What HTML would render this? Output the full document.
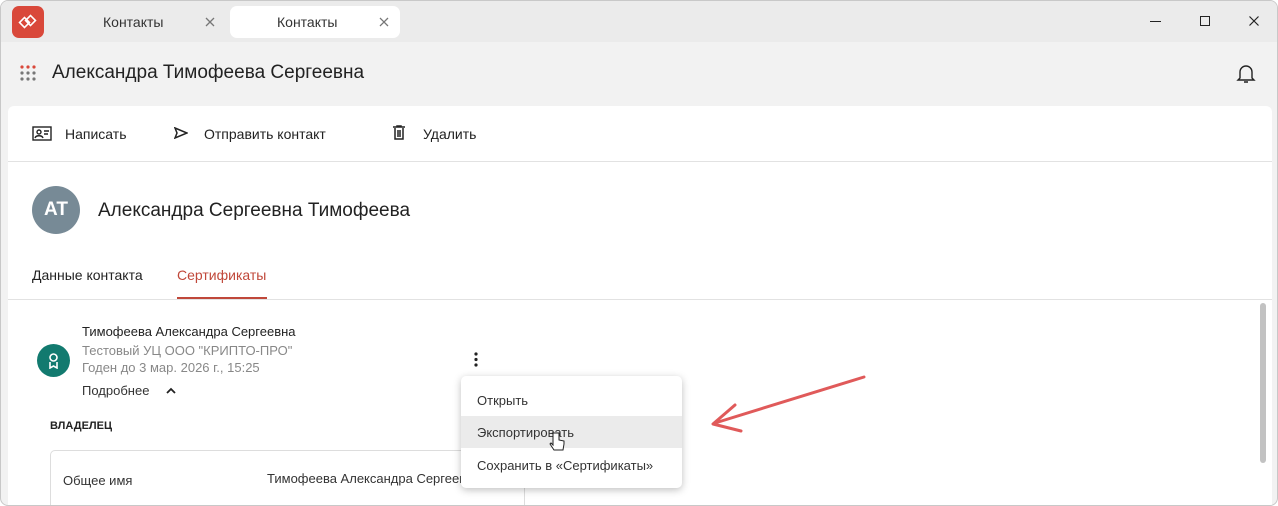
<!DOCTYPE html>
<html><head><meta charset="utf-8"><style>
*{box-sizing:border-box;margin:0;padding:0}
html,body{width:1278px;height:506px;overflow:hidden}
body{background:#fff;font-family:"Liberation Sans",sans-serif;color:#222;position:relative}
.win{position:absolute;left:0;top:0;width:1278px;height:506px;background:#f2f2f2;border:1px solid #c8c8c8;border-radius:8px;overflow:hidden}
.titlebar{position:absolute;left:0;top:0;width:100%;height:41px;background:#ebebeb}
.abs{position:absolute}
.t{position:absolute;white-space:nowrap}
.card{position:absolute;left:7px;top:105px;width:1264px;height:401px;background:#fff;border-radius:6px 6px 0 0;overflow:hidden}
</style></head><body><div class="win">
<div class="titlebar"></div>
<div class="abs" style="left:11px;top:5px;width:32px;height:32px;background:#d9483a;border-radius:7px"></div>
<svg class="abs" style="left:17px;top:11px" width="20" height="20" viewBox="0 0 20 20" fill="none" stroke="#fff" stroke-width="1.6"><rect x="3" y="7" width="7" height="7" transform="rotate(45 6.5 10.5)"/><rect x="9" y="5" width="7" height="7" transform="rotate(45 12.5 8.5)"/></svg>
<div class="t" style="left:102px;top:13px;font-size:14px;color:#333">Контакты</div>
<svg class="abs" style="left:204px;top:16px" width="10" height="10" stroke="#777" stroke-width="1.3"><path d="M1 1l8 8M9 1l-8 8"/></svg>
<div class="abs" style="left:229px;top:5px;width:170px;height:32px;background:#fff;border-radius:7px"></div>
<div class="t" style="left:276px;top:13px;font-size:14px;color:#333">Контакты</div>
<svg class="abs" style="left:378px;top:16px" width="10" height="10" stroke="#777" stroke-width="1.3"><path d="M1 1l8 8M9 1l-8 8"/></svg>
<div class="abs" style="left:1149px;top:20px;width:11px;height:1px;background:#222"></div>
<div class="abs" style="left:1199px;top:15px;width:10px;height:10px;border:1.2px solid #222"></div>
<svg class="abs" style="left:1248px;top:15px" width="10" height="10" stroke="#222" stroke-width="1.2"><path d="M0.5 0.5l9 9M9.5 0.5l-9 9"/></svg>
<svg class="abs" style="left:18px;top:64px" width="18" height="16"><g fill="#d9483a"><circle cx="3" cy="2" r="1.6"/><circle cx="9" cy="2" r="1.6"/><circle cx="15" cy="2" r="1.6"/></g><g fill="#777"><circle cx="3" cy="8" r="1.6"/><circle cx="9" cy="8" r="1.6"/><circle cx="15" cy="8" r="1.6"/><circle cx="3" cy="14" r="1.6"/><circle cx="9" cy="14" r="1.6"/><circle cx="15" cy="14" r="1.6"/></g></svg>
<div class="t" style="left:51px;top:61px;font-size:19px;color:#222">Александра Тимофеева Сергеевна</div>
<svg class="abs" style="left:1235px;top:62px" width="20" height="22" fill="none" stroke="#222" stroke-width="1.4"><path d="M4 15V9a6 6 0 0 1 12 0v6l2 2H2z"/><path d="M8 19h4"/></svg>
<div class="card">
<svg class="abs" style="left:24px;top:20px" width="20" height="15" fill="none" stroke="#222" stroke-width="1.4"><rect x="1" y="1" width="18" height="13"/><circle cx="7" cy="6" r="2"/><path d="M3 12c1-3 7-3 8 0"/><path d="M12 5h5M12 8h4"/></svg>
<div class="t" style="left:57px;top:20px;font-size:14px">Написать</div>
<svg class="abs" style="left:166px;top:21px" width="14" height="12" fill="none" stroke="#222" stroke-width="1.5"><path d="M1 1l12 5-12 5 2-5z"/></svg>
<div class="t" style="left:196px;top:20px;font-size:14px">Отправить контакт</div>
<svg class="abs" style="left:385px;top:19px" width="12" height="15" fill="none" stroke="#222" stroke-width="1.5"><path d="M0 2h12M4 2V1h4v1M2 3v11h8V3M5 5v7M7 5v7"/></svg>
<div class="t" style="left:415px;top:20px;font-size:14px">Удалить</div>
<div class="abs" style="left:0;top:55px;width:1264px;height:1px;background:#e2e2e2"></div>
<div class="abs" style="left:24px;top:80px;width:48px;height:48px;border-radius:50%;background:#778a96;color:#fff;font-weight:bold;font-size:19px;text-align:center;line-height:48px">AT</div>
<div class="t" style="left:90px;top:94px;font-size:19px">Александра Сергеевна Тимофеева</div>
<div class="t" style="left:24px;top:161px;font-size:14px">Данные контакта</div>
<div class="t" style="left:169px;top:161px;font-size:14px;color:#c0483a">Сертификаты</div>
<div class="abs" style="left:169px;top:191px;width:90px;height:2px;background:#c0483a"></div>
<div class="abs" style="left:0;top:193px;width:1264px;height:1px;background:#e2e2e2"></div>
<div class="abs" style="left:1252px;top:197px;width:6px;height:160px;background:#c2c2c2;border-radius:3px"></div>
<div class="abs" style="left:29px;top:238px;width:33px;height:33px;border-radius:50%;background:#127a6f"></div>
<svg class="abs" style="left:39px;top:246px" width="13" height="17" fill="none" stroke="#fff" stroke-width="1.6"><circle cx="6.5" cy="5.5" r="3.5"/><path d="M3 10v6l3.5-2 3.5 2v-6"/></svg>
<div class="t" style="left:74px;top:218px;font-size:13px;color:#222">Тимофеева Александра Сергеевна</div>
<div class="t" style="left:74px;top:237px;font-size:13px;color:#888">Тестовый УЦ ООО "КРИПТО-ПРО"</div>
<div class="t" style="left:74px;top:254px;font-size:13px;color:#888">Годен до 3 мар. 2026 г., 15:25</div>
<div class="t" style="left:74px;top:277px;font-size:13px;color:#333">Подробнее</div>
<svg class="abs" style="left:157px;top:280px" width="12" height="8" fill="none" stroke="#222" stroke-width="1.8"><path d="M2 7l4-4 4 4"/></svg>
<svg class="abs" style="left:466px;top:246px" width="4" height="15" fill="#222"><circle cx="2" cy="2" r="1.6"/><circle cx="2" cy="7.5" r="1.6"/><circle cx="2" cy="13" r="1.6"/></svg>
<div class="t" style="left:42px;top:314px;font-size:11px;font-weight:bold;color:#222">ВЛАДЕЛЕЦ</div>
<div class="abs" style="left:42px;top:344px;width:475px;height:100px;border:1px solid #ddd;border-radius:5px"></div>
<div class="t" style="left:55px;top:367px;font-size:13px;color:#333">Общее имя</div>
<div class="t" style="left:259px;top:365px;font-size:13px;color:#333">Тимофеева Александра Сергеевна</div>
</div>
<div class="abs" style="left:460px;top:375px;width:221px;height:112px;background:#fff;border-radius:5px;box-shadow:0 2px 8px rgba(0,0,0,.25)">
<div class="t" style="left:16px;top:17px;font-size:13px;color:#333">Открыть</div>
<div class="abs" style="left:0;top:40px;width:221px;height:32px;background:#ebebeb"></div>
<div class="t" style="left:16px;top:49px;font-size:13px;color:#333">Экспортировать</div>
<div class="t" style="left:16px;top:82px;font-size:13px;color:#333">Сохранить в «Сертификаты»</div>
</div>
<svg class="abs" style="left:547px;top:430px" width="18" height="26"><path d="M5 2v12l-2-2-1 1 4 6h9l1-6V10l-5-1V2z" fill="#fff" stroke="#222" stroke-width="1"/></svg>
<svg class="abs" style="left:700px;top:370px" width="170" height="70"><path d="M163 6L14 52" stroke="#e05a5a" stroke-width="3" fill="none" stroke-linecap="round"/><path d="M34 34L12 53l28 7" stroke="#e05a5a" stroke-width="3" fill="none" stroke-linecap="round" stroke-linejoin="round"/></svg>
</div></body></html>
